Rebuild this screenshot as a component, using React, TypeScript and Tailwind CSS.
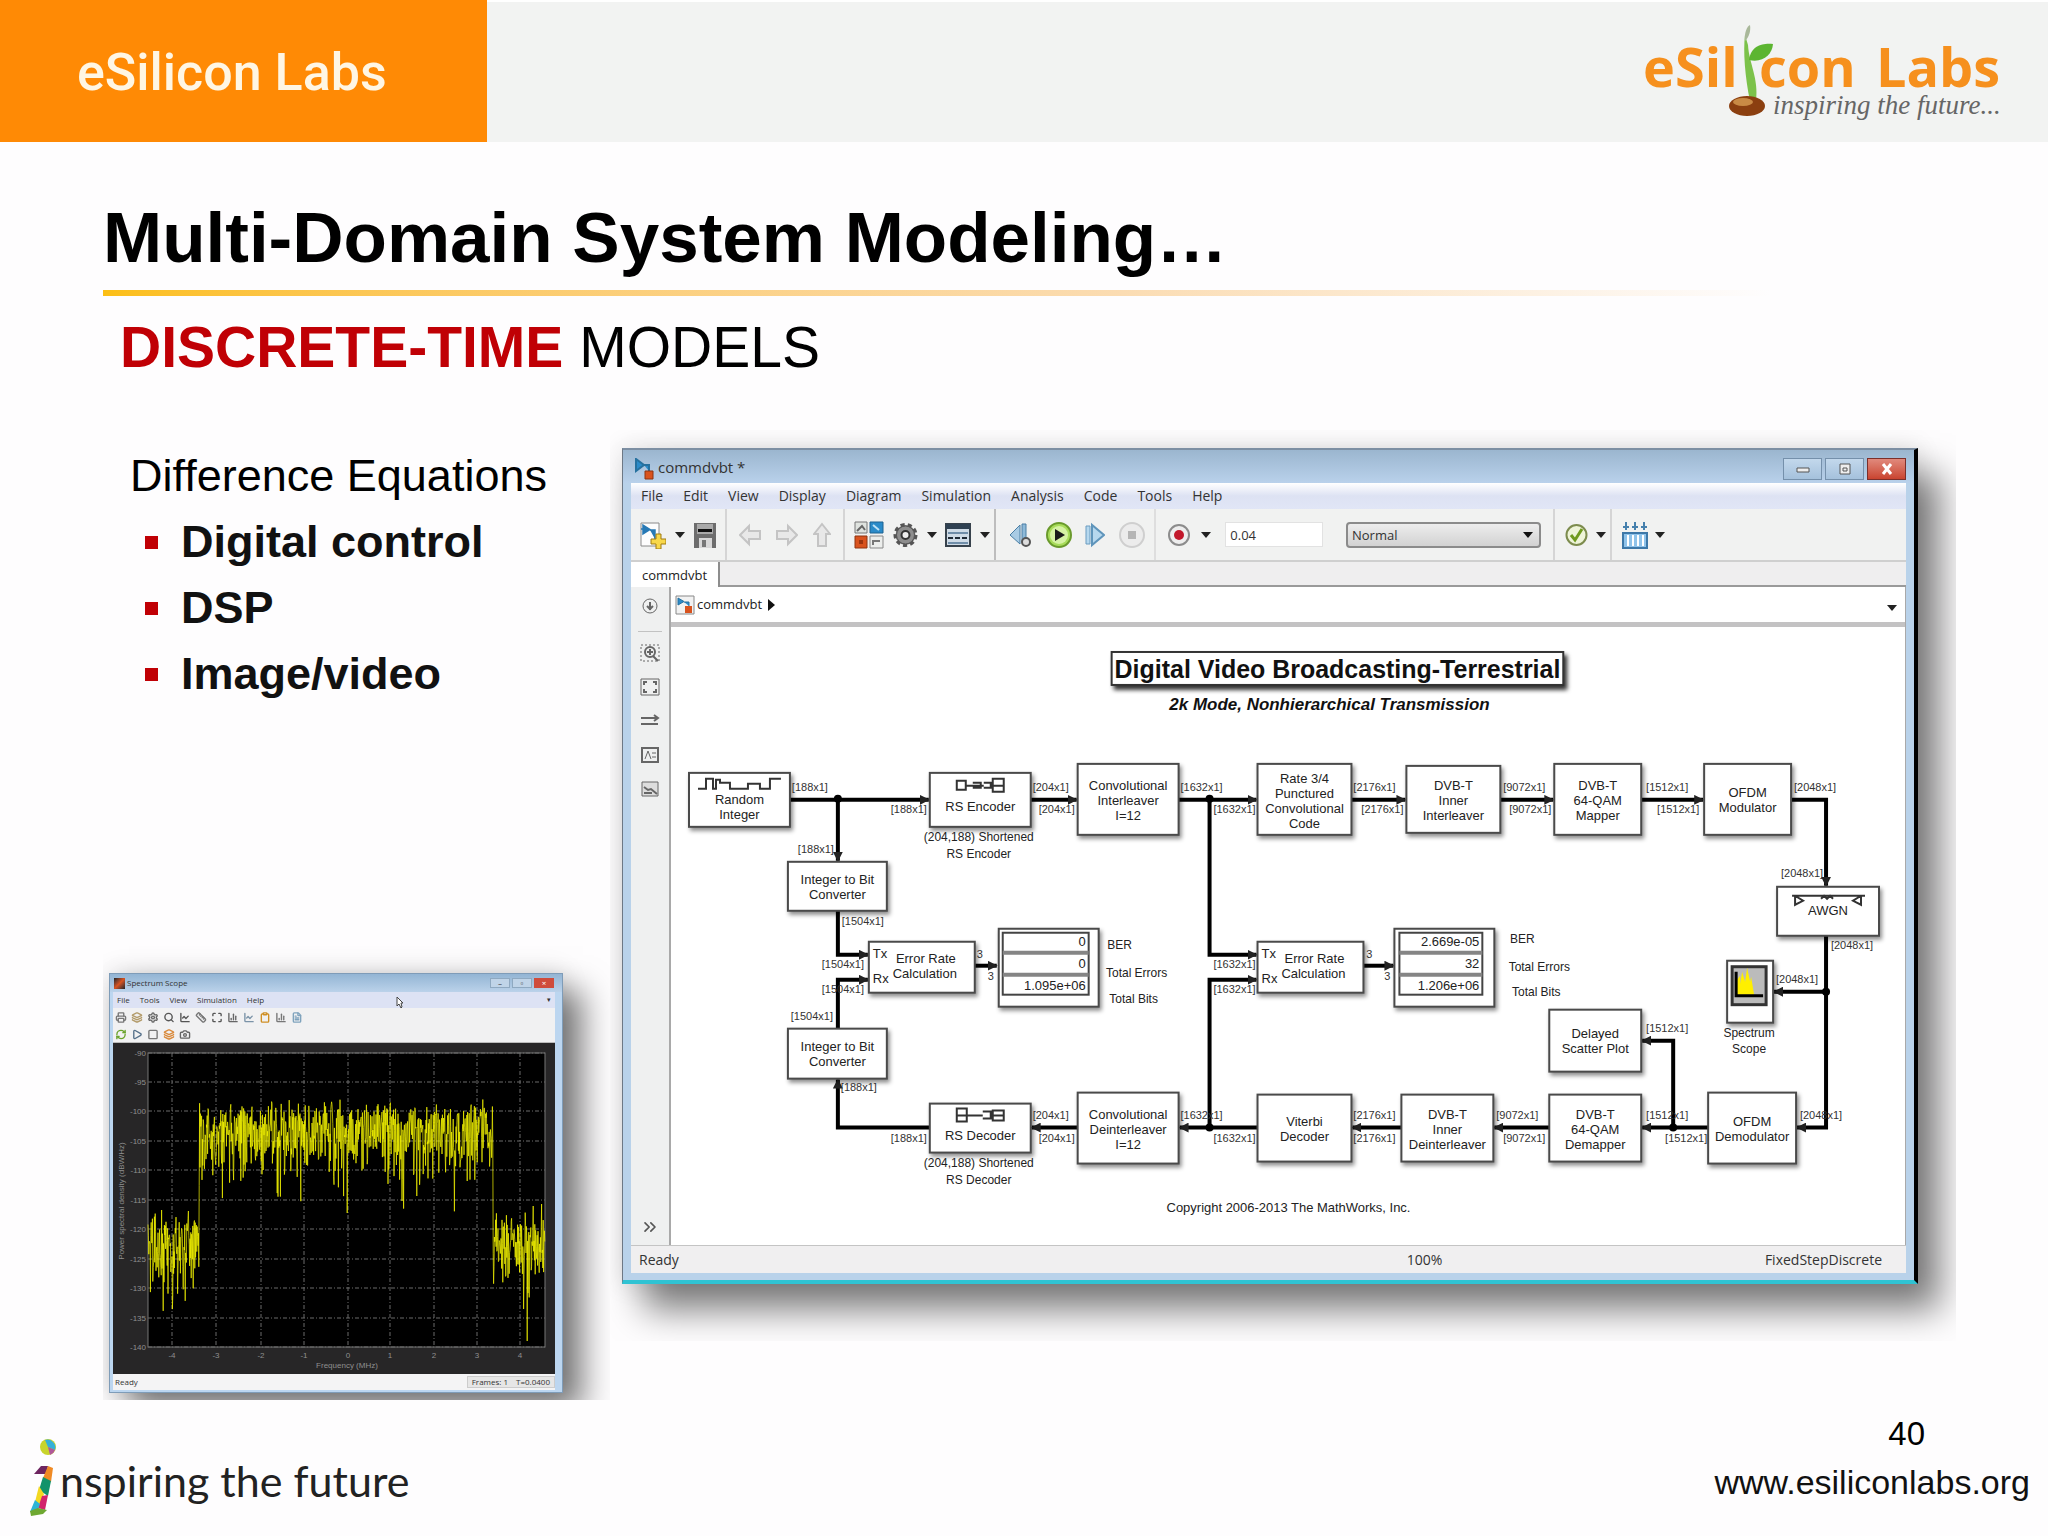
import type { ReactNode } from "react"
import {
  BarChart3,
  Camera,
  ChevronsRight,
  Clipboard,
  FileText,
  Layers,
  LineChart,
  Maximize,
  Play,
  Printer,
  RefreshCw,
  Ruler,
  Search,
  Settings,
  Square,
} from "lucide-react"

type Block = { x: number; y: number; w: number; h: number; lines: string[]; top?: number }
type Label = [x: number, y: number, text: string]

const blocks: Block[] = [
  { x: 689, y: 773, w: 101, h: 54, lines: ["Random", "Integer"], top: 800 },
  { x: 930, y: 773, w: 101, h: 54, lines: ["RS Encoder"], top: 807 },
  { x: 1078, y: 764, w: 101, h: 71, lines: ["Convolutional", "Interleaver", "I=12"] },
  { x: 1258, y: 764, w: 94, h: 71, lines: ["Rate 3/4", "Punctured", "Convolutional", "Code"] },
  { x: 1407, y: 766, w: 94, h: 67, lines: ["DVB-T", "Inner", "Interleaver"] },
  { x: 1555, y: 764, w: 87, h: 71, lines: ["DVB-T", "64-QAM", "Mapper"] },
  { x: 1705, y: 764, w: 87, h: 71, lines: ["OFDM", "Modulator"] },
  { x: 788, y: 862, w: 99, h: 49, lines: ["Integer to Bit", "Converter"] },
  { x: 788, y: 1029, w: 99, h: 50, lines: ["Integer to Bit", "Converter"] },
  { x: 1778, y: 887, w: 102, h: 49, lines: ["AWGN"], top: 911 },
  { x: 930, y: 1104, w: 101, h: 49, lines: ["RS Decoder"], top: 1136 },
  { x: 1078, y: 1093, w: 101, h: 71, lines: ["Convolutional", "Deinterleaver", "I=12"] },
  { x: 1258, y: 1095, w: 94, h: 67, lines: ["Viterbi", "Decoder"] },
  { x: 1402, y: 1095, w: 92, h: 67, lines: ["DVB-T", "Inner", "Deinterleaver"] },
  { x: 1550, y: 1095, w: 92, h: 67, lines: ["DVB-T", "64-QAM", "Demapper"] },
  { x: 1709, y: 1093, w: 88, h: 71, lines: ["OFDM", "Demodulator"] },
  { x: 1550, y: 1010, w: 92, h: 62, lines: ["Delayed", "Scatter Plot"] },
]

const wires = [
  "M790 800H929",
  "M838 800V861",
  "M1031 800H1077",
  "M1179 800H1257",
  "M1352 800H1406",
  "M1501 800H1554",
  "M1642 800H1704",
  "M1792 800H1827V886",
  "M838 911V955H868",
  "M838 1029V980H868",
  "M975 966H997",
  "M1210 800V955H1257",
  "M1210 1128V980H1257",
  "M1364 966H1394",
  "M1827 936V1128H1798",
  "M1827 992H1775",
  "M1709 1128H1643",
  "M1674 1128V1041H1643",
  "M1550 1128H1495",
  "M1402 1128H1353",
  "M1258 1128H1180",
  "M1078 1128H1032",
  "M930 1128H838V1080",
]

const signals: Label[] = [
  [810, 787, "[188x1]"],
  [909, 809, "[188x1]"],
  [816, 849, "[188x1]"],
  [863, 921, "[1504x1]"],
  [843, 964, "[1504x1]"],
  [843, 989, "[1504x1]"],
  [812, 1016, "[1504x1]"],
  [859, 1087, "[188x1]"],
  [1051, 787, "[204x1]"],
  [1057, 809, "[204x1]"],
  [1202, 787, "[1632x1]"],
  [1235, 809, "[1632x1]"],
  [1375, 787, "[2176x1]"],
  [1383, 809, "[2176x1]"],
  [1525, 787, "[9072x1]"],
  [1531, 809, "[9072x1]"],
  [1668, 787, "[1512x1]"],
  [1679, 809, "[1512x1]"],
  [1816, 787, "[2048x1]"],
  [1803, 873, "[2048x1]"],
  [1853, 945, "[2048x1]"],
  [1798, 979, "[2048x1]"],
  [1235, 964, "[1632x1]"],
  [1235, 989, "[1632x1]"],
  [980, 954, "3"],
  [991, 976, "3"],
  [1370, 954, "3"],
  [1388, 976, "3"],
  [1668, 1028, "[1512x1]"],
  [909, 1138, "[188x1]"],
  [1051, 1115, "[204x1]"],
  [1057, 1138, "[204x1]"],
  [1202, 1115, "[1632x1]"],
  [1235, 1138, "[1632x1]"],
  [1375, 1115, "[2176x1]"],
  [1375, 1138, "[2176x1]"],
  [1518, 1115, "[9072x1]"],
  [1525, 1138, "[9072x1]"],
  [1668, 1115, "[1512x1]"],
  [1687, 1138, "[1512x1]"],
  [1822, 1115, "[2048x1]"],
]

const captions: Label[] = [
  [979, 837, "(204,188) Shortened"],
  [979, 854, "RS Encoder"],
  [979, 1163, "(204,188) Shortened"],
  [979, 1180, "RS Decoder"],
  [1120, 945, "BER"],
  [1137, 973, "Total Errors"],
  [1134, 999, "Total Bits"],
  [1523, 939, "BER"],
  [1540, 967, "Total Errors"],
  [1537, 992, "Total Bits"],
  [1750, 1033, "Spectrum"],
  [1750, 1049, "Scope"],
]

const junctions = [
  [838, 799],
  [1210, 799],
  [1827, 992],
  [1210, 1128],
  [1674, 1128],
]

const boxClass = "fill-white stroke-[#4a4a4a] drop-shadow-[2px_3px_2px_rgba(0,0,0,0.45)]"

function ErrorRate({ x, w }: { x: number; w: number }) {
  return (
    <g>
      <rect x={x} y={942} width={w} height={51} strokeWidth={2} className={boxClass} />
      <text x={x + 4} y={954} textAnchor="start">Tx</text>
      <text x={x + 4} y={979} textAnchor="start">Rx</text>
      <text x={x + 57} y={959}>Error Rate</text>
      <text x={x + 56} y={974}>Calculation</text>
    </g>
  )
}

function Display({ x, cellX, cellW, values }: { x: number; cellX: number; cellW: number; values: string[] }) {
  return (
    <g>
      <rect x={x} y={929} width={100} height={78} strokeWidth={2} className={boxClass} />
      <rect x={cellX} y={933} width={cellW} height={62} fill="none" stroke="#444" strokeWidth={2} />
      <path d={`M${cellX} 953h${cellW}M${cellX} 975h${cellW}`} stroke="#858585" strokeWidth={4} />
      {values.map((value, i) => (
        <text key={i} x={cellX + cellW - 3} y={942 + i * 22} textAnchor="end">
          {value}
        </text>
      ))}
    </g>
  )
}

function BlockDiagram() {
  return (
    <svg
      viewBox="671 627 1235 619"
      className="block h-auto w-full font-['Liberation_Sans',sans-serif] text-[13px]"
      textAnchor="middle"
      dominantBaseline="central"
      fill="#222"
    >
      <defs>
        <marker id="arrow" viewBox="0 0 10 10" refX="9" refY="5" markerWidth="10" markerHeight="10" markerUnits="userSpaceOnUse" orient="auto">
          <path d="M0 0L10 5L0 10z" />
        </marker>
      </defs>
      <rect x={1112} y={652} width={452} height={33} fill="#fff" stroke="#333" strokeWidth={2} className="drop-shadow-[3px_4px_2px_rgba(0,0,0,0.8)]" />
      <text x={1338} y={669} className="text-[25px] font-bold" fill="#111">
        Digital Video Broadcasting-Terrestrial
      </text>
      <text x={1330} y={705} className="text-[17px] font-bold italic" fill="#111">
        2k Mode, Nonhierarchical Transmission
      </text>

      {wires.map((d) => (
        <path key={d} d={d} fill="none" stroke="#000" strokeWidth={4} markerEnd="url(#arrow)" />
      ))}
      {junctions.map(([x, y]) => (
        <circle key={`${x}-${y}`} cx={x} cy={y} r={4} fill="#000" />
      ))}

      {blocks.map((b) => {
        const first = b.top ?? b.y + b.h / 2 - (b.lines.length - 1) * 7
        return (
          <g key={`${b.x}-${b.y}`}>
            <rect x={b.x} y={b.y} width={b.w} height={b.h} strokeWidth={2} className={boxClass} />
            {b.lines.map((line, i) => (
              <text key={line} x={b.x + b.w / 2} y={first + i * 15}>
                {line}
              </text>
            ))}
          </g>
        )
      })}
      <ErrorRate x={869} w={106} />
      <ErrorRate x={1258} w={106} />
      <Display x={999} cellX={1003} cellW={86} values={["0", "0", "1.095e+06"]} />
      <Display x={1395} cellX={1400} cellW={83} values={["2.669e-05", "32", "1.206e+06"]} />

      {/* block glyphs */}
      <g fill="none" stroke="#333" strokeWidth={2}>
        <path d="M698 789H706V779H713V789H716V780H720V783H730V789H748V784H760V789H770V779H781" />
        <path d="M957 781h9v9h-9zM966 786h18M973 783h8v5h-8M993 779h11v13h-11zM993 786h11M984 783h7v5h-7" />
        <path d="M957 1109h10v13h-10zM957 1116h10M967 1116h16M983 1112h8v7h-8M993 1111h11v10h-11zM993 1116h11" />
        <path d="M1793 896h73M1796 896v9l8-4-8-5M1862 896v9l-8-4 8-5M1822 899l3-3 3 3 3-3 3 3" />
      </g>
      <rect x={1728} y={961} width={46} height={62} strokeWidth={2} className={boxClass} />
      <rect x={1733} y={967} width={34} height={38} fill="#bbb" stroke="#333" strokeWidth={3} />
      <path d="M1738 995V980l3-4v8l2-12 3 10 2-14 3 14 1-5 3 18z" fill="#ffef00" />
      <path d="M1737 972V996H1764" fill="none" stroke="#000" strokeWidth={3} />

      <g className="text-[11px]" fill="#333">
        {signals.map(([x, y, text]) => (
          <text key={`${x}-${y}`} x={x} y={y}>
            {text}
          </text>
        ))}
      </g>
      {captions.map(([x, y, text]) => (
        <text key={`${x}-${y}`} x={x} y={y} className="text-[12px]">
          {text}
        </text>
      ))}
      <text x={1289} y={1208}>Copyright 2006-2013 The MathWorks, Inc.</text>
    </svg>
  )
}

function ToolGroup({ className, children }: { className: string; children: ReactNode }) {
  return <div className={`flex h-full items-center justify-between ${className}`}>{children}</div>
}

function Tool({ label, w, children }: { label: string; w: number; children: ReactNode }) {
  return (
    <button type="button" aria-label={label} className="shrink-0">
      <svg width={w} height={28} viewBox={`0 0 ${w} 28`} className="block">
        {children}
      </svg>
    </button>
  )
}

function Caret({ label }: { label: string }) {
  return (
    <button type="button" aria-label={label} className="shrink-0">
      <svg width={10} height={6} viewBox="0 0 10 6" className="block">
        <path d="M0 0H10L5 6z" fill="#222" />
      </svg>
    </button>
  )
}

function Toolbar() {
  return (
    <div className="flex h-[53px] items-center border-b-2 border-[#cfcfcf] bg-[#f1f2f1]">
      <ToolGroup className="w-24 border-r-2 border-[#d5d5d5] px-[9px]">
        <Tool label="New" w={26}>
          <path d="M1 2H19V25H1z" fill="#fdfdfd" stroke="#8a8a8a" />
          <path d="M3 4v9l7-4.500zM10 9h5v9M3 8H1" fill="#2779b5" stroke="#2779b5" strokeWidth={1.500} />
          <path d="M16 13h5v5h5v5h-5v5h-5v-5h-5v-5h5z" fill="#f8d84a" stroke="#a07b10" />
        </Tool>
        <Caret label="New options" />
        <Tool label="Save" w={22}>
          <path d="M0 2H22V27H0z" fill="#6d6d6d" />
          <path d="M3 3H19V13H3z" fill="#a9a9a9" />
          <path d="M4 8H18V11H4z" fill="#111" />
          <path d="M5 17H18V27H5z" fill="#d8d8d8" />
          <path d="M8 19H12V26H8z" fill="#777" />
        </Tool>
      </ToolGroup>
      <ToolGroup className="w-[118px] border-r-2 border-[#d5d5d5] px-3">
        <Tool label="Back" w={22}>
          <path d="M1 14L10 5V10H21V18H10V23z" fill="#e8e8e8" stroke="#c4c4c4" strokeWidth={2} />
        </Tool>
        <Tool label="Forward" w={22}>
          <path d="M21 14L12 5V10H1V18H12V23z" fill="#e8e8e8" stroke="#c4c4c4" strokeWidth={2} />
        </Tool>
        <Tool label="Up" w={18}>
          <path d="M9 3L17 13H13V25H5V13H1z" fill="#e8e8e8" stroke="#c4c4c4" strokeWidth={2} />
        </Tool>
      </ToolGroup>
      <ToolGroup className="w-[151px] border-r-2 border-[#bdbdbd] pr-1 pl-[9px]">
        <Tool label="Library browser" w={30}>
          <path d="M1 1H13V12H1z" fill="#dfe3df" stroke="#777" />
          <path d="M3 10L8 5l3 4" fill="none" stroke="#666" strokeWidth={2} />
          <path d="M16 1H29V12H16z" fill="#2b8bc9" stroke="#1f6391" />
          <path d="M19 4l6 5" stroke="#bfe2f6" strokeWidth={2} />
          <path d="M1 15H13V27H1z" fill="#d9531e" stroke="#8e3511" />
          <path d="M5 19h4v4H5z" fill="#9c3510" />
          <path d="M16 15H29V27H16z" fill="#eceeec" stroke="#888" />
          <path d="M19 24v-4h7" fill="none" stroke="#777" strokeWidth={2} />
        </Tool>
        <Tool label="Model configuration" w={25}>
          <circle cx={12.500} cy={14} r={10} fill="#777" stroke="#555" strokeWidth={4} strokeDasharray="4 3" />
          <circle cx={12.500} cy={14} r={9} fill="#8d8d8d" stroke="#555" />
          <circle cx={12.500} cy={14} r={4} fill="#eee" stroke="#333" strokeWidth={2} />
        </Tool>
        <Caret label="Configuration options" />
        <Tool label="Model explorer" w={26}>
          <path d="M1 3H25V25H1z" fill="#cfdbe6" stroke="#37424c" strokeWidth={2} />
          <path d="M1 3H25V8H1z" fill="#2f4152" />
          <path d="M3 12h20M3 22h20" stroke="#6f8da8" strokeWidth={2} />
          <path d="M3 17h20" stroke="#1f2a35" strokeWidth={2} strokeDasharray="5 2" />
        </Tool>
        <Caret label="Explorer options" />
      </ToolGroup>
      <ToolGroup className="w-40 border-r-2 border-[#dedede] pr-2 pl-[13px]">
        <Tool label="Step back" w={23}>
          <path d="M11 4V23L1 14z" fill="#a8cbe4" stroke="#4a7fa5" />
          <path d="M13 3h4v18h-4z" fill="#8db9d8" stroke="#4a7fa5" />
          <circle cx={17} cy={21} r={4} fill="#ddd" stroke="#555" strokeWidth={2} />
        </Tool>
        <Tool label="Run" w={28}>
          <circle cx={14} cy={14} r={12} fill="#a8dc5a" stroke="#6a9a2c" strokeWidth={2} />
          <circle cx={14} cy={14} r={9} fill="#d6f2a4" />
          <path d="M10 8L20 14L10 20z" fill="#1a1a1a" />
        </Tool>
        <Tool label="Step forward" w={20}>
          <path d="M1 5h4v18H1z" fill="#b6d8ee" stroke="#6a9cc0" />
          <path d="M7 4V24L19 14z" fill="#b6d8ee" stroke="#5f95bb" strokeWidth={2} />
        </Tool>
        <Tool label="Stop" w={28}>
          <circle cx={14} cy={14} r={12} fill="#ececec" stroke="#cfcfcf" strokeWidth={2} />
          <path d="M10 10h8v8h-8z" fill="#b5b5b5" />
        </Tool>
      </ToolGroup>
      <ToolGroup className="w-[399px] border-r-2 border-[#d5d5d5] px-3">
        <Tool label="Record" w={22}>
          <circle cx={11} cy={14} r={10} fill="#eee" stroke="#8c8c8c" strokeWidth={2} />
          <circle cx={11} cy={14} r={5} fill="#c2182b" />
        </Tool>
        <Caret label="Record options" />
        <input
          aria-label="Stop time"
          defaultValue="0.04"
          className="ml-1 h-[25px] w-[98px] border border-[#e2e2e2] bg-white px-1 text-[13px] text-[#333]"
        />
        <div className="relative ml-3">
          <select
            aria-label="Simulation mode"
            className="h-[26px] w-[195px] appearance-none rounded-sm border-2 border-[#8b8b8b] bg-linear-to-b from-[#ededed] to-[#d2d2d2] pl-1 text-[13px] leading-5 text-[#333]"
          >
            <option>Normal</option>
          </select>
          <svg width={10} height={6} viewBox="0 0 10 6" className="pointer-events-none absolute top-2.5 right-2">
            <path d="M0 0H10L5 6z" fill="#111" />
          </svg>
        </div>
      </ToolGroup>
      <ToolGroup className="w-[57px] border-r-2 border-[#d5d5d5] pr-1 pl-2.5">
        <Tool label="Check model" w={23}>
          <circle cx={11.500} cy={14} r={10} fill="#eef4d8" stroke="#7d8c4e" strokeWidth={2} />
          <path d="M6 14l4 5 7-11" fill="none" stroke="#6f9a1e" strokeWidth={3} />
        </Tool>
        <Caret label="Check options" />
      </ToolGroup>
      <ToolGroup className="w-[57px] pr-1 pl-2.5">
        <Tool label="Build" w={26}>
          <path d="M4 1v8M13 1v8M22 1v8M1 6h6M10 6h6M19 6h6" stroke="#4680ad" strokeWidth={2} />
          <path d="M1 12H25V27H1z" fill="#8fc3ea" stroke="#3d78a8" strokeWidth={2} />
          <path d="M6 14v11M11 14v11M16 14v11M21 14v11" stroke="#fff" strokeWidth={2} />
        </Tool>
        <Caret label="Build options" />
      </ToolGroup>
    </div>
  )
}

const menus = ["File", "Edit", "View", "Display", "Diagram", "Simulation", "Analysis", "Code", "Tools", "Help"]

function WindowButton({ label, className, children }: { label: string; className: string; children: ReactNode }) {
  return (
    <button type="button" aria-label={label} className={`flex h-[22px] w-[39px] items-center justify-center border ${className}`}>
      <svg width={14} height={12} viewBox="0 0 14 12">
        {children}
      </svg>
    </button>
  )
}

function RailIcon({ label, children }: { label: string; children: ReactNode }) {
  return (
    <button type="button" aria-label={label}>
      <svg width={20} height={18} viewBox="0 0 20 18" fill="none" stroke="#666" strokeWidth={2} className="block">
        {children}
      </svg>
    </button>
  )
}

function ModelWindow() {
  return (
    <div className="border-t-2 border-r-4 border-b-4 border-l border-t-[#7d8fa3] border-r-black border-b-[#30c3d3] border-l-[#6d7885] bg-[#b9d2ea] px-2 pb-[7px] font-['Open_Sans',sans-serif] text-[#333] shadow-[22px_26px_34px_rgba(0,0,0,0.5),0_0_24px_rgba(0,0,0,0.12)]">
      <div className="-mx-2 flex h-[33px] items-center bg-linear-to-b from-[#9bb6cf] to-[#b9d1eb] pr-2 pl-[11px]">
        <svg width={20} height={22} viewBox="0 0 20 22" className="mt-1">
          <path d="M2 1v12l8-6zM10 7h5v6" fill="#2b8bc9" stroke="#26719f" strokeWidth={2} />
          <path d="M11 13h8v8h-8z" fill="#d9531e" stroke="#8e3511" />
        </svg>
        <span className="ml-1 text-[15px] leading-5">commdvbt *</span>
        <div className="mt-1 ml-auto flex gap-[3px]">
          <WindowButton label="Minimize" className="border-[#7590ab] bg-linear-to-b from-[#c3d8ec] to-[#a5c1dc]">
            <path d="M1 5h12v4H1z" fill="#eee" stroke="#555" />
          </WindowButton>
          <WindowButton label="Maximize" className="border-[#7590ab] bg-linear-to-b from-[#c3d8ec] to-[#a5c1dc]">
            <path d="M2 1h10v10H2zM5 5h4v3H5z" fill="#eee" stroke="#555" />
          </WindowButton>
          <WindowButton label="Close" className="border-[#7c2f2a] bg-linear-to-b from-[#e0897c] to-[#c9432f]">
            <path d="M3 1l8 10M11 1L3 11" stroke="#fff" strokeWidth={3} />
          </WindowButton>
        </div>
      </div>
      <nav className="flex h-[26px] items-center gap-5 bg-linear-to-b from-white via-[#dde2f3] to-[#e1e6f6] pl-2.5">
        {menus.map((item) => (
          <button type="button" key={item} className="text-[14px] leading-5">
            {item}
          </button>
        ))}
      </nav>
      <Toolbar />
      <div className="flex h-[25px] border-b-2 border-[#9a9a9a] bg-[#efeeef]">
        <button type="button" className="-mb-0.5 w-[89px] border-r-2 border-[#8d8d8d] bg-white text-[13px] leading-5 text-[#222]">
          commdvbt
        </button>
      </div>
      <div className="flex bg-[#eff0f0]">
        <div className="flex w-[38px] shrink-0 flex-col items-center gap-4 pt-2.5 pb-2">
          <RailIcon label="Hide browser">
            <circle cx={10} cy={9} r={7} strokeWidth={1} />
            <path d="M10 5v8M7 9l3 3 3-3" />
          </RailIcon>
          <div className="-mb-1 h-px w-6 bg-[#c2c2c2]" />
          <RailIcon label="Zoom">
            <path d="M1 1h18v16H1z" strokeWidth={1} strokeDasharray="2 2" />
            <circle cx={10} cy={8} r={5} />
            <path d="M10 5v6M7 8h6M13 12l5 5" />
          </RailIcon>
          <RailIcon label="Fit to view">
            <path d="M1 1h18v16H1z" strokeWidth={1} />
            <path d="M4 7V4h3M13 4h3v3M16 11v3h-3M7 14H4v-3" />
          </RailIcon>
          <RailIcon label="Sample time">
            <path d="M1 6h17M1 12h17M14 3l4 3-4 3" />
          </RailIcon>
          <RailIcon label="Annotation">
            <path d="M2 2h16v14H2z" />
            <path d="M5 13l3-8 3 8M12 7h4M12 11h4" strokeWidth={1} />
          </RailIcon>
          <RailIcon label="Image">
            <path d="M2 2h16v14H2z" fill="#ddd" strokeWidth={1} />
            <path d="M4 7l4 3 3-1 6 5M4 13h8" />
          </RailIcon>
          <button type="button" aria-label="More" className="mt-auto">
            <ChevronsRight className="h-5 w-5 text-[#555]" />
          </button>
        </div>
        <div className="min-w-0 flex-1 border-r border-l-2 border-[#a9a9a9] bg-white">
          <div className="flex h-[35px] items-center pr-2 pl-1">
            <svg width={20} height={20} viewBox="0 0 20 20">
              <path d="M1 1h18v18H1z" fill="#f2f2f2" stroke="#888" />
              <path d="M3 3v7l6-3.500zM9 7h5v4" fill="#2b8bc9" stroke="#26719f" />
              <path d="M10 11h7v7h-7z" fill="#d9531e" />
            </svg>
            <span className="ml-0.5 text-[13px] text-[#222]">commdvbt</span>
            <svg width={7} height={12} viewBox="0 0 7 12" className="ml-1.5">
              <path d="M0 0L7 6L0 12z" fill="#111" />
            </svg>
            <div className="ml-auto">
              <Caret label="Show path" />
            </div>
          </div>
          <div className="h-[5px] bg-[#c3c2c3]" />
          <BlockDiagram />
        </div>
      </div>
      <div className="flex h-7 items-center border-t border-[#c4c4c4] bg-[#f0eff0] pr-6 pl-2 text-[14px]">
        <span className="flex-[15]">Ready</span>
        <span className="flex-[7]">100%</span>
        <span>FixedStepDiscrete</span>
      </div>
    </div>
  )
}

// small seeded generator, keeps the noise trace the same on every render
function makeTrace() {
  let seed = 4217
  const rand = () => {
    seed = (seed * 16807) % 2147483647
    return seed / 2147483647
  }
  const points: string[] = []
  for (let x = 35; x <= 432; x += 0.4) {
    const inBand = x > 86 && x < 380
    const power = -(Math.log(rand() + 0.0001) + Math.log(rand() + 0.0001)) / 2
    const y = (inBand ? 84 : 198) - 60 * Math.log10(power)
    const top = (inBand ? 54 : 155) + rand() * 18
    points.push(`${x.toFixed(1)},${Math.min(Math.max(y, top), inBand ? 170 : 298).toFixed(1)}`)
  }
  return points.join(" ")
}

const trace = makeTrace()
const gridX = [59, 103, 148, 191, 235, 277, 321, 364, 407]
const gridY = [10, 39, 68, 98, 127, 157, 186, 216, 245, 275, 304]

function SpectrumPlot() {
  return (
    <svg viewBox="0 0 442 331" className="block h-auto w-full bg-[#272627] font-['Liberation_Sans',sans-serif] text-[8px]" fill="#8f8f8f">
      <rect x={35} y={10} width={397} height={294} fill="#000" stroke="#777" />
      <g stroke="#6a6a6a" strokeDasharray="4 2 1 2">
        {gridX.map((x) => (
          <path key={x} d={`M${x} 10V304`} />
        ))}
        {gridY.map((y) => (
          <path key={y} d={`M35 ${y}H432`} />
        ))}
      </g>
      <polyline points={trace} fill="none" stroke="#f6f600" strokeWidth={0.7} />
      {gridY.map((y, i) => (
        <text key={y} x={33} y={y + 3} textAnchor="end">
          {-90 - i * 5}
        </text>
      ))}
      {gridX.map((x, i) => (
        <text key={x} x={x} y={315} textAnchor="middle">
          {i - 4}
        </text>
      ))}
      <text x={234} y={325} textAnchor="middle">Frequency (MHz)</text>
      <text transform="translate(11 158) rotate(-90)" textAnchor="middle">Power spectral density (dBW/Hz)</text>
    </svg>
  )
}

const scopeTools = [
  { name: "Print", Icon: Printer, color: "text-[#777]" },
  { name: "Copy settings", Icon: Layers, color: "text-[#b39b6a]" },
  { name: "Settings", Icon: Settings, color: "text-[#666]" },
  { name: "Zoom", Icon: Search, color: "text-[#555]" },
  { name: "Trace", Icon: LineChart, color: "text-[#555]" },
  { name: "Cursor", Icon: Ruler, color: "text-[#777]" },
  { name: "Fit", Icon: Maximize, color: "text-[#555]" },
  { name: "Measure", Icon: BarChart3, color: "text-[#666]" },
  { name: "Spectrum", Icon: LineChart, color: "text-[#7b93a8]" },
  { name: "Clipboard", Icon: Clipboard, color: "text-[#cf8f25]" },
  { name: "Peaks", Icon: BarChart3, color: "text-[#777]" },
  { name: "Notes", Icon: FileText, color: "text-[#7fa3bd]" },
]

const runTools = [
  { name: "Restart", Icon: RefreshCw, color: "text-[#6aa32c]" },
  { name: "Play", Icon: Play, color: "text-[#55708a]" },
  { name: "Stop", Icon: Square, color: "text-[#777]" },
  { name: "Highlight", Icon: Layers, color: "text-[#d98a3c]" },
  { name: "Snapshot", Icon: Camera, color: "text-[#666]" },
]

function ScopeWindow() {
  return (
    <div className="border border-[#7f9cb8] bg-[#bcd6f0] pr-[7px] pb-[2px] pl-[3px] font-['Open_Sans',sans-serif] text-[8px] leading-3 text-[#333] shadow-[20px_18px_30px_rgba(0,0,0,0.5),0_0_24px_rgba(0,0,0,0.15)]">
      <div className="-mr-[7px] -ml-[3px] flex h-[18px] items-center bg-linear-to-b from-[#93b5d4] to-[#bbd2ea] pr-2 pl-1">
        <span className="h-[11px] w-[11px] bg-linear-to-br from-[#222] via-[#d9531e] to-[#222]" />
        <span className="ml-0.5 text-[8px]">Spectrum Scope</span>
        <div className="ml-auto flex gap-0.5">
          <button type="button" aria-label="Minimize scope" className="h-[10px] w-5 border border-[#8fa9c1] bg-[#c0d4e8] leading-[6px]">–</button>
          <button type="button" aria-label="Maximize scope" className="h-[10px] w-5 border border-[#8fa9c1] bg-[#c0d4e8] leading-[6px]">▫</button>
          <button type="button" aria-label="Close scope" className="h-[10px] w-5 bg-[#cf4c3c] leading-[8px] text-white">×</button>
        </div>
      </div>
      <nav className="relative flex h-4 items-center gap-2.5 bg-[#dde2f4] pl-1">
        {["File", "Tools", "View", "Simulation", "Help"].map((item) => (
          <button type="button" key={item}>{item}</button>
        ))}
        <span className="ml-auto pr-1 text-[7px]">▾</span>
        <svg width={8} height={13} viewBox="0 0 8 13" className="absolute top-1 left-[64%]">
          <path d="M1 1V10L3 8L5 12L6 11L5 7H7z" fill="#fff" stroke="#444" />
        </svg>
      </nav>
      <div className="flex h-[18px] items-center gap-1 bg-[#f1f1f2] pl-0.5">
        {scopeTools.map(({ name, Icon, color }) => (
          <button type="button" key={name} aria-label={name}>
            <Icon strokeWidth={3} className={`h-[11px] w-3 ${color}`} />
          </button>
        ))}
      </div>
      <div className="flex h-[17px] items-center gap-1 border-b border-[#bbb] bg-[#f1f1f2] pl-0.5">
        {runTools.map(({ name, Icon, color }) => (
          <button type="button" key={name} aria-label={name}>
            <Icon strokeWidth={3} className={`h-[11px] w-3 ${color}`} />
          </button>
        ))}
      </div>
      <SpectrumPlot />
      <div className="flex h-4 items-center justify-between bg-[#f4f4f5] pl-0.5">
        <span>Ready</span>
        <span className="flex gap-2 border border-[#ccc] bg-[#e6e6e6] px-1 leading-[10px]">
          <span>Frames: 1</span>
          <span>T=0.0400</span>
        </span>
      </div>
    </div>
  )
}

function BrandLogo() {
  return (
    <svg width={372} height={110} viewBox="0 0 372 110" role="img" aria-label="eSilicon Labs" className="font-['Open_Sans',sans-serif]">
      <g fill="#f6901e" className="text-[54px] font-bold">
        <text x={4} y={70}>eSil</text>
        <text x={120} y={70}>con</text>
        <text x={237} y={70}>Labs</text>
      </g>
      <path d="M106 18C104 34 106 60 111 84H117C120 62 110 46 109 28z" fill="#7cc24a" />
      <path d="M110 43C112 28 124 26 134 27C133 38 124 46 110 43z" fill="#5cb531" />
      <path d="M106 24C105 16 108 9 111 8C112 14 110 20 106 24z" fill="#a9b89a" />
      <ellipse cx={108} cy={89} rx={18} ry={10} fill="#8b3f10" />
      <ellipse cx={104} cy={85} rx={10} ry={4} fill="#c98a45" />
      <text x={134} y={97} fill="#666" className="font-['Liberation_Serif',serif] text-[27px] italic">
        inspiring the future...
      </text>
    </svg>
  )
}

function ColourfulI() {
  return (
    <svg width={34} height={82} viewBox="0 0 34 82" aria-hidden="true">
      <circle cx={22} cy={11} r={8} fill="#c8d42c" />
      <path d="M19 4A8 8 0 0 1 29 14L22 11z" fill="#35b0d8" />
      <path d="M29 14A8 8 0 0 1 24 19L22 11z" fill="#b0579a" />
      <path d="M8 38L15 30H22L20 38z" fill="#6d2560" />
      <path d="M22 30L27 32L25 46L17 42z" fill="#f08a24" />
      <path d="M17 41L25 45L22 60L13 54z" fill="#12936a" />
      <path d="M13 50L18 58L14 68L9 66z" fill="#f3d822" />
      <path d="M16 60L22 59L19 74L12 72z" fill="#d2236c" />
      <path d="M9 64L14 68L11 76L4 76z" fill="#2cb4d6" />
      <path d="M4 75L12 72L21 74L17 78L5 80z" fill="#6fa832" />
    </svg>
  )
}

const topics = ["Digital control", "DSP", "Image/video"]

export default function App() {
  return (
    <div className="flex min-h-screen flex-col bg-[#fefdfe] font-['Liberation_Sans',sans-serif] text-black">
      <header className="flex h-[142px] items-stretch justify-between border-t-2 border-white bg-[#f2f3f2]">
        <div className="-mt-0.5 flex w-[487px] items-center bg-[#ff8a05] pt-1 pl-[77px] font-[Roboto,sans-serif] text-[52px] font-medium text-[#fff6e4]">
          eSilicon Labs
        </div>
        <div className="flex items-center pr-[37px]">
          <BrandLogo />
        </div>
      </header>

      <main className="flex-1">
        <div className="pt-14 pr-[92px] pl-[103px]">
          <h1 className="text-[71px] leading-[80px] font-bold">Multi-Domain System Modeling…</h1>
          <div className="mt-3 h-1.5 bg-linear-to-r from-[#fcbf14] via-[#fbdcb2] via-55% to-transparent to-90%" />
          <h2 className="mt-[19px] pl-[17px] text-[57px] leading-[64px]">
            <strong className="text-[#c00005]">DISCRETE-TIME</strong> MODELS
          </h2>
        </div>

        <div className="mt-[51px] flex pr-[92px] pl-[103px]">
          <div className="w-[507px] shrink-0 pt-[13px] text-[45px] leading-[66px]">
            <p className="pl-[27px]">Difference Equations</p>
            <ul className="pl-[42px] font-bold text-[#111]">
              {topics.map((topic) => (
                <li key={topic} className="flex items-center gap-[23px]">
                  <span className="h-[13px] w-[13px] bg-[#c00005]" />
                  {topic}
                </li>
              ))}
            </ul>
            <figure className="mt-[233px] overflow-hidden pt-[33px] pr-[47px] pb-[7px] pl-1.5">
              <ScopeWindow />
            </figure>
          </div>
          <figure className="min-w-0 flex-1 self-start overflow-hidden pt-[18px] pr-[38px] pb-[57px] pl-3">
            <ModelWindow />
          </figure>
        </div>
      </main>

      <footer className="flex items-start justify-between pt-[32px] pr-[18px] pb-[18px] pl-[26px]">
        <div className="flex items-center">
          <ColourfulI />
          <span className="mt-2 font-[Lato,sans-serif] text-[43px] leading-[52px] text-[#222]">nspiring the future</span>
        </div>
        <div className="flex flex-col items-end text-[33px]">
          <span className="-mt-[22px] pr-[105px] leading-10">40</span>
          <a href="https://www.esiliconlabs.org" className="mt-2 text-[34px] leading-10 text-[#111]">
            www.esiliconlabs.org
          </a>
        </div>
      </footer>
    </div>
  )
}
